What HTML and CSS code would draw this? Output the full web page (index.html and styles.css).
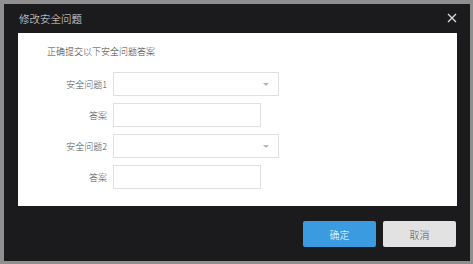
FILE: index.html
```html
<!DOCTYPE html>
<html lang="zh-CN">
<head>
    <meta charset="UTF-8">
    <title>修改安全问题</title>
    <link rel="stylesheet" href="styles.css">
</head>
<body>

<div class="dialog">
    <div class="dialog-header">
        <span class="dialog-title">修改安全问题</span>
        <span class="close-btn">
            <svg width="10" height="10" viewBox="0 0 10 10">
                <path d="M1 1 L9 9 M9 1 L1 9" stroke="#d8d8d8" stroke-width="1.4" fill="none"/>
            </svg>
        </span>
    </div>
    <div class="dialog-body">
        <p class="intro">正确提交以下安全问题答案</p>
        <div class="form-row">
            <label>安全问题1</label>
            <div class="select-box"><span class="arrow"></span></div>
        </div>
        <div class="form-row">
            <label>答案</label>
            <div class="text-box"></div>
        </div>
        <div class="form-row">
            <label>安全问题2</label>
            <div class="select-box"><span class="arrow"></span></div>
        </div>
        <div class="form-row">
            <label>答案</label>
            <div class="text-box"></div>
        </div>
    </div>
    <div class="dialog-footer">
        <button class="btn btn-primary">确定</button>
        <button class="btn btn-cancel">取消</button>
    </div>
</div>

</body>
</html>
```

FILE: styles.css
```css
body {
    margin: 0;
    background-color: #8f8f8f;
    font-family: "Noto Sans CJK SC", "Liberation Sans", sans-serif;
}
.dialog {
    width: 466px;
    height: 257px;
    margin: 4px 0 0 4px;
    background-color: #1b1a1c;
    display: flex;
    flex-direction: column;
}
.dialog-header {
    height: 29px;
    display: flex;
    align-items: center;
    justify-content: space-between;
    padding: 0 13px 0 15px;
}
.dialog-title {
    color: #e4e4e4;
    font-size: 10.5px;
    font-weight: 300;
}
.close-btn {
    display: flex;
    margin-top: -1px;
}
.dialog-body {
    background-color: #fff;
    margin: 0 13px 0 14px;
    height: 173px;
    padding-top: 13px;
    box-sizing: border-box;
}
.intro {
    margin: 0 0 14px 29px;
    font-size: 9px;
    font-weight: 300;
    line-height: 12px;
    color: #444;
}
.form-row {
    display: flex;
    align-items: center;
    margin-bottom: 7px;
}
.form-row label {
    width: 89px;
    text-align: right;
    margin-right: 6px;
    font-size: 9px;
    font-weight: 300;
    color: #555;
}
.select-box, .text-box {
    height: 24px;
    box-sizing: border-box;
    border: 1px solid #e0e0e0;
    position: relative;
}
.select-box {
    width: 166px;
}
.text-box {
    width: 148px;
}
.arrow {
    position: absolute;
    right: 9px;
    top: 10px;
    border-left: 3px solid transparent;
    border-right: 3px solid transparent;
    border-top: 3px solid #b5b5b5;
}
.dialog-footer {
    display: flex;
    justify-content: flex-end;
    gap: 7px;
    padding: 15px 14px 0 0;
}
.btn {
    width: 73px;
    height: 26px;
    border: none;
    border-radius: 2px;
    font-family: "Noto Sans CJK SC", "Liberation Sans", sans-serif;
    font-size: 10px;
    font-weight: 300;
    cursor: pointer;
}
.btn-primary {
    background-color: #3a9be0;
    color: #fff;
}
.btn-cancel {
    background-color: #e2e2e2;
    color: #555;
}
```
